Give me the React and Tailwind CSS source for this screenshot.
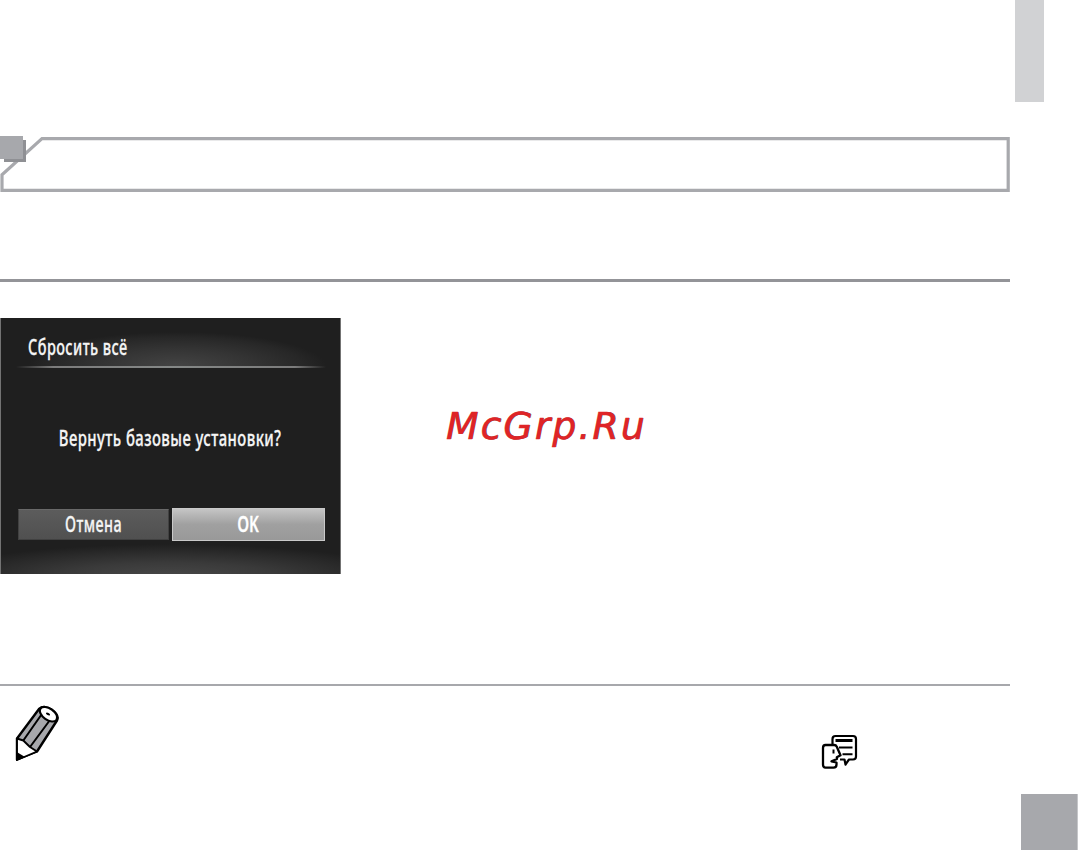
import React from 'react';

const SectionFrame = () => (
  <svg width="1010" height="58" viewBox="0 0 1010 58" className="block shrink-0">
    <path
      d="M42 2.6H1008.2V54.4H2V38.7Z"
      fill="#fff"
      stroke="#a8a9ad"
      strokeWidth="3.2"
    />
    <rect x="4" y="4" width="22" height="22" fill="#8f9094" />
    <rect x="0" y="0" width="23" height="23" fill="#a7a8ac" />
  </svg>
);

const PencilIcon = () => (
  <svg width="46" height="58" viewBox="0 0 46 58" className="block">
    <path
      d="M3 33.5 L25 4 C28 1.200 33 1.500 37.500 4.500 C42.500 8 44.800 12 43 15.500 L23 46.500 L3 54.500Z"
      fill="#a7a8ac"
      stroke="#000"
      strokeWidth="2.400"
      strokeLinejoin="round"
    />
    <path d="M3 33.500 L9.300 35.500 L16 42 L23 46.500 L3 55Z" fill="#fff" stroke="#000" strokeWidth="1.900" strokeLinejoin="round" />
    <path d="M2 46.500 L11 52 L2 56Z" fill="#000" />
    <path d="M9.300 35.500 L27.500 9.500 M16 42 L36 15" stroke="#000" strokeWidth="2" fill="none" />
    <ellipse cx="34.500" cy="9.200" rx="9.800" ry="5.700" transform="rotate(35 34.500 9.200)" fill="#fff" stroke="#000" strokeWidth="2.100" />
    <ellipse cx="34" cy="9" rx="2.200" ry="1.200" transform="rotate(25 34 9)" fill="#000" />
  </svg>
);

const SpeechIcon = () => (
  <svg width="37" height="36" viewBox="0 0 37 36" className="block">
    <path
      d="M11.500 11V5Q11.500 2 14.500 2H32Q35 2 35 5V22.500Q35 25.500 32 25.500H28L24.500 30.500L23.500 25.500H19"
      fill="#fff"
      stroke="#000"
      strokeWidth="2.200"
      strokeLinejoin="round"
    />
    <path d="M14.500 6.500H31.500" stroke="#000" strokeWidth="3" />
    <path d="M18 13.500H31.500M21.500 20.200H31.500" stroke="#000" strokeWidth="2" />
    <path
      d="M4.500 11H13Q15 11 15.800 12.800L19.500 21.300L15.800 23.300L16 25L10.500 27.300L15.500 28.500V30.500Q15.500 33.700 12.500 33.700H4.500Q2 33.700 2 30.500V14Q2 11 4.500 11Z"
      fill="#fff"
      stroke="#000"
      strokeWidth="2.300"
      strokeLinejoin="round"
    />
    <path d="M12.500 15.500V19.500" stroke="#000" strokeWidth="2" />
  </svg>
);

const CameraScreen = () => (
  <div className="flex h-64 w-[341px] shrink-0 flex-col overflow-hidden border-x border-[#737373] bg-[#1f1f1f] font-['Noto_Sans','Open_Sans',sans-serif] text-[21px] leading-[30px] font-medium text-[#f5f5f5]">
    {/* Title */}
    <div className="mt-[14px] ml-[15px] h-[34px] w-[310px] bg-[radial-gradient(ellipse_48%_100%_at_52%_100%,#444_0%,#343434_50%,#272727_85%,#1f1f1f_100%)] pl-3">
      <span className="block w-max origin-left scale-x-[0.69] tracking-[0.6px] whitespace-nowrap [-webkit-text-stroke:0.3px_#f5f5f5]">Сбросить всё</span>
    </div>
    <div className="ml-[15px] h-[2px] w-[310px] shrink-0 bg-[linear-gradient(90deg,transparent,#7c7c7c_12%,#858887_50%,#7c7c7c_90%,transparent)]" />

    {/* Message */}
    <div className="flex h-[140px] shrink-0 justify-center pt-[55px]">
      <span className="block h-[30px] scale-x-[0.708] tracking-[0.6px] whitespace-nowrap [-webkit-text-stroke:0.3px_#f5f5f5]">Вернуть базовые установки?</span>
    </div>

    {/* Buttons */}
    <div className="flex h-[33px] shrink-0 items-center gap-[3px] pl-[17px]">
      <div className="flex h-[31px] w-[151px] items-center justify-center border border-[#414141] border-t-[#696969] bg-linear-to-b from-[#5c5c5c] to-[#505050]">
        <span className="block -mt-0.5 scale-x-[0.685] tracking-[0.6px] [-webkit-text-stroke:0.3px_#f5f5f5]">Отмена</span>
      </div>
      <div className="flex h-[33px] w-[153px] items-center justify-center border border-[#c9c9c9] bg-linear-to-b from-[#c5c5c5] via-[#a0a0a0] to-[#999] font-semibold text-white">
        <span className="block -mt-0.5 scale-x-[0.72] [-webkit-text-stroke:0.3px_#fff]">OK</span>
      </div>
    </div>
    <div className="grow bg-[radial-gradient(ellipse_70%_100%_at_50%_110%,#484848_0%,#3a3a3a_45%,#292929_80%,#1f1f1f_100%)]" />
  </div>
);

const App = () => (
  <div className="flex h-[850px] w-[1078px] overflow-hidden bg-white">
    <main className="flex w-[1010px] shrink-0 flex-col pt-[136px]">
      <SectionFrame />
      <div className="mt-[85px] h-[3px] shrink-0 bg-[#939498]" />

      <div className="mt-9 flex h-64 shrink-0">
        <CameraScreen />
        <div className="pt-[86px] pl-[105px] font-['DejaVu_Sans',sans-serif] text-[37.5px] leading-[44px] tracking-[2.2px] whitespace-nowrap text-[#df2427] italic [-webkit-text-stroke:0.4px_#df2427] [text-shadow:0.6px_0_0_#444]">
          McGrp.Ru
        </div>
      </div>

      <div className="mt-[110px] h-[2px] shrink-0 bg-[#a7a8ac]" />
      <div className="flex justify-between pt-[19px] pr-[152px] pl-[14px]">
        <PencilIcon />
        <div className="pt-[29px]">
          <SpeechIcon />
        </div>
      </div>
    </main>

    {/* Page edge tabs */}
    <aside className="flex w-[68px] flex-col justify-between">
      <div className="ml-[5px] h-[102px] w-[29px] bg-[#d1d2d4]" />
      <div className="ml-[11px] h-14 w-[57px] border-r border-[#c5c6c9] bg-[#a7a8ac]" />
    </aside>
  </div>
);

export default App;
